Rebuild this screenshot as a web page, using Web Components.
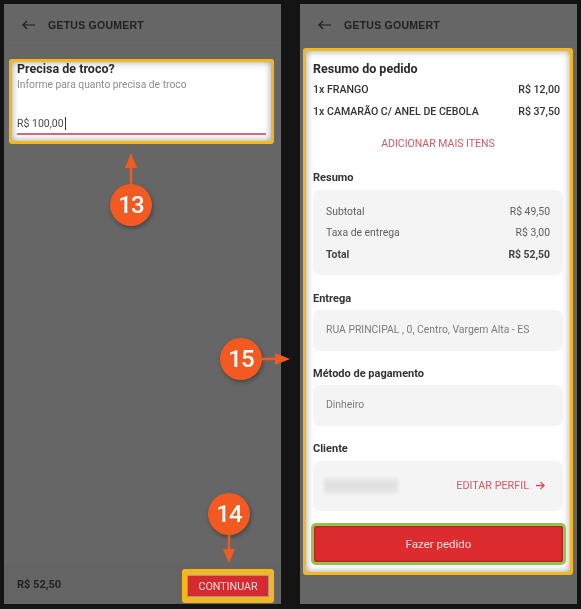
<!DOCTYPE html>
<html lang="pt">
<head>
<meta charset="utf-8">
<title>Getus Goumert</title>
<style>
  html, body { margin: 0; height: 100%; background: #141414; }
  body { font-family: Roboto, "Liberation Sans", Arial, sans-serif; color: #2b2b2b; }
</style>
</head>
<body>
<tutorial-stage>
  <phone-frame>
    <change-card></change-card>
    <footer-bar slot="footer" total="R$ 52,50"></footer-bar>
  </phone-frame>

  <phone-frame>
    <order-card>
      <order-line name="1x FRANGO" price="R$ 12,00"></order-line>
      <order-line name="1x CAMARÃO C/ ANEL DE CEBOLA" price="R$ 37,50"></order-line>
      <add-more>ADICIONAR MAIS ITENS</add-more>

      <info-section label="Resumo" style="--pad:11px 13px 9px;--gap:5px;margin-bottom:16px">
        <sum-line name="Subtotal" value="R$ 49,50"></sum-line>
        <sum-line name="Taxa de entrega" value="R$ 3,00"></sum-line>
        <sum-line name="Total" value="R$ 52,50" strong></sum-line>
      </info-section>
      <info-section label="Entrega" style="--pad:13px 13px 14px">RUA PRINCIPAL , 0, Centro, Vargem Alta - ES</info-section>
      <info-section label="Método de pagamento" style="--pad:13px 13px 14px">Dinheiro</info-section>
      <info-section label="Cliente" style="--pad:16px 13px 16px 11px;--gap:5px">
        <client-row></client-row>
      </info-section>
      <order-button>Fazer pedido</order-button>
    </order-card>
  </phone-frame>

  <step-badge n="13" dir="up" style="left:110px;top:184px"></step-badge>
  <step-badge n="14" dir="down" style="left:208px;top:493px"></step-badge>
  <step-badge n="15" dir="right" style="left:220px;top:338px"></step-badge>
</tutorial-stage>

<script>
class TutorialStage extends HTMLElement {
  constructor() {
    super();
    this.attachShadow({mode: 'open'});
    this.shadowRoot.innerHTML = `
      <style>
        :host {
          display: flex;
          position: relative;
          width: 581px;
          height: 609px;
          box-sizing: border-box;
          padding: 4px 4px 5px 4px;
          gap: 19px;
          overflow: hidden;
          filter: blur(.2px);
        }
      </style>
      <slot></slot>
    `;
  }
}

class PhoneFrame extends HTMLElement {
  constructor() {
    super();
    this.attachShadow({mode: 'open'});
    this.shadowRoot.innerHTML = `
      <style>
        :host {
          display: flex;
          flex-direction: column;
          width: 277px;
          background: #666;
        }
        header {
          display: flex;
          align-items: center;
          gap: 13px;
          height: 42px;
          padding: 0 0 0 18px;
          font: 700 10.5px "Liberation Sans", Arial, sans-serif;
          letter-spacing: .25px;
          color: #222;
          border-bottom: 1px solid #636363;
          box-sizing: border-box;
        }
        svg { width: 13px; height: 10px; display: block; margin-top: 1px; }
        main { flex: 1; }
      </style>
      <header>
        <svg viewBox="0 0 13 10" fill="none" stroke="#1d1d1d" stroke-width="1.2">
          <path d="M13 5H1M5 1 1 5l4 4"/>
        </svg>
        <span>GETUS GOUMERT</span>
      </header>
      <main><slot></slot></main>
      <slot name="footer"></slot>
    `;
  }
}

class ChangeCard extends HTMLElement {
  constructor() {
    super();
    this.attachShadow({mode: 'open'});
    this.shadowRoot.innerHTML = `
      <style>
        :host {
          display: block;
          margin: 13px 7px 0 5px;
          height: 85px;
          box-sizing: border-box;
          border: 3px solid #f4b71e;
          border-radius: 3px;
          background: #fff;
          box-shadow: inset 0 0 7px rgba(0,0,0,.4);
          padding: 0 5px;
        }
        h3 { margin: -1px 0 0; font-size: 12.5px; line-height: 15px; font-weight: 700; color: #2a2a2a; }
        p { margin: 2px 0 0; font-size: 10.3px; line-height: 13px; color: #8c8c8c; }
        .value {
          margin-top: 24px;
          height: 20px;
          box-sizing: border-box;
          font-size: 10.5px;
          line-height: 14px;
          color: #4a4a4a;
          border-bottom: 2px solid #d8677a;
          padding-top: 2px;
        }
        i { border-left: 1px solid #333; margin-left: 1px; }
      </style>
      <h3>Precisa de troco?</h3>
      <p>Informe para quanto precisa de troco</p>
      <div class="value">R$ 100,00<i></i></div>
    `;
  }
}

class FooterBar extends HTMLElement {
  constructor() {
    super();
    this.attachShadow({mode: 'open'});
    this.shadowRoot.innerHTML = `
      <style>
        :host {
          display: flex;
          align-items: center;
          justify-content: space-between;
          height: 39px;
          padding: 0 7px 0 13px;
          background: #646464;
          font-size: 11px;
          font-weight: 700;
          color: #222;
        }
        button {
          width: 92px;
          height: 34px;
          margin-top: 3px;
          box-sizing: border-box;
          border: solid #f4b71e;
          border-width: 6px 5px;
          border-radius: 3px;
          background: #d62a30;
          box-shadow: inset 0 0 0 1px #b09095;
          color: #f3dcdc;
          font: 400 10.7px Roboto, "Liberation Sans", Arial, sans-serif;
          padding: 0;
        }
      </style>
      <span></span>
      <button>CONTINUAR</button>
    `;
    this.shadowRoot.querySelector('span').textContent = this.getAttribute('total');
  }
}

class OrderCard extends HTMLElement {
  constructor() {
    super();
    this.attachShadow({mode: 'open'});
    this.shadowRoot.innerHTML = `
      <style>
        :host {
          display: block;
          margin: 2px 4px 0 3px;
          height: 527px;
          box-sizing: border-box;
          border: 3px solid #f4b71e;
          border-radius: 3px;
          background: #fff;
          box-shadow: inset 0 0 7px rgba(0,0,0,.4);
          padding: 10px 7px 0;
        }
        h2 { margin: 0 0 6px; font-size: 12.5px; font-weight: 700; line-height: 16px; color: #2a2a2a; }
      </style>
      <h2>Resumo do pedido</h2>
      <slot></slot>
    `;
  }
}

class OrderLine extends HTMLElement {
  constructor() {
    super();
    this.attachShadow({mode: 'open'});
    this.shadowRoot.innerHTML = `
      <style>
        :host {
          display: flex;
          justify-content: space-between;
          height: 22px;
          padding-right: 3px;
          font-size: 10.6px;
          line-height: 14px;
          font-weight: 500;
          color: #333;
        }
      </style>
      <span>${this.getAttribute('name')}</span>
      <span>${this.getAttribute('price')}</span>
    `;
  }
}

class AddMore extends HTMLElement {
  constructor() {
    super();
    this.attachShadow({mode: 'open'});
    this.shadowRoot.innerHTML = `
      <style>
        :host {
          display: block;
          margin: 10px 0 19px;
          text-align: center;
          font-size: 10.5px;
          line-height: 14px;
          color: #d05a63;
        }
      </style>
      <slot></slot>
    `;
  }
}

class InfoSection extends HTMLElement {
  constructor() {
    super();
    this.attachShadow({mode: 'open'});
    this.shadowRoot.innerHTML = `
      <style>
        :host { display: block; margin-bottom: 15px; }
        h4 { margin: 0 0 var(--gap, 4px); padding-top: 1px; font-size: 11px; font-weight: 700; line-height: 14px; color: #333; }
        div {
          background: #f4f4f4;
          border-radius: 7px;
          padding: var(--pad, 13px);
          font-size: 10.4px;
          line-height: 14px;
          color: #7c7c7c;
        }
      </style>
      <h4>${this.getAttribute('label')}</h4>
      <div><slot></slot></div>
    `;
  }
}

class SumLine extends HTMLElement {
  constructor() {
    super();
    this.attachShadow({mode: 'open'});
    const strong = this.hasAttribute('strong');
    this.shadowRoot.innerHTML = `
      <style>
        :host {
          display: flex;
          justify-content: space-between;
          height: 21.5px;
          align-items: center;
          font-size: 10.4px;
          color: ${strong ? '#444' : '#5e5e5e'};
          font-weight: ${strong ? 700 : 400};
        }
      </style>
      <span>${this.getAttribute('name')}</span>
      <span>${this.getAttribute('value')}</span>
    `;
  }
}

class ClientRow extends HTMLElement {
  constructor() {
    super();
    this.attachShadow({mode: 'open'});
    this.shadowRoot.innerHTML = `
      <style>
        :host {
          display: flex;
          align-items: center;
          justify-content: space-between;
          height: 18px;
          padding-right: 5px;
        }
        .blur {
          width: 74px;
          height: 16px;
          background: linear-gradient(#e9e9e9, #dedede 50%, #e9e9e9);
          border-radius: 2px;
          filter: blur(1.5px);
        }
        .edit {
          display: flex;
          align-items: center;
          gap: 7px;
          font-size: 10.8px;
          color: #d05a63;
        }
        svg { width: 9px; height: 9px; }
      </style>
      <span class="blur"></span>
      <span class="edit">EDITAR PERFIL
        <svg viewBox="0 0 10 10" fill="none" stroke="#cf4a54" stroke-width="1.4"><path d="M0 5h9M5 1l4 4-4 4"/></svg>
      </span>
    `;
  }
}

class OrderButton extends HTMLElement {
  constructor() {
    super();
    this.attachShadow({mode: 'open'});
    this.shadowRoot.innerHTML = `
      <style>
        :host {
          display: block;
          margin: -3px -3px 0 -2px;
          height: 42px;
          box-sizing: border-box;
          border: 3px solid #8ec64a;
          border-radius: 5px;
        }
        button {
          display: block;
          width: 100%;
          height: 100%;
          border: 0;
          border-radius: 2px;
          background: #dd2c2f;
          box-shadow: inset 0 0 3px #8a1c1e;
          color: #f6dcdc;
          font: 11.5px Roboto, "Liberation Sans", Arial, sans-serif;
          padding: 0;
        }
      </style>
      <button><slot></slot></button>
    `;
  }
}

// numbered callouts that sit on top of the screenshots
const arrows = {
  up:    {box: 'left:15px;top:-31px;width:12px;height:32px', view: '0 0 12 32', path: 'M6 0l6 15H7.2v17H4.8V15H0z'},
  down:  {box: 'left:15px;top:41px;width:12px;height:29px', view: '0 0 12 29', path: 'M4.8 0h2.4v15H12L6 29 0 15h4.8z'},
  right: {box: 'left:41px;top:15px;width:29px;height:12px', view: '0 0 29 12', path: 'M0 4.8h14V0l15 6-15 6V7.2H0z'}
};

class StepBadge extends HTMLElement {
  constructor() {
    super();
    this.attachShadow({mode: 'open'});
    const arrow = arrows[this.getAttribute('dir')];
    this.shadowRoot.innerHTML = `
      <style>
        :host {
          position: absolute;
          width: 42px;
          height: 42px;
          border-radius: 50%;
          background: #f25a22;
          box-shadow: 1px 2px 4px rgba(0,0,0,.35);
          display: flex;
          align-items: center;
          justify-content: center;
          color: #fff;
          font-size: 24px;
          font-weight: 500;
          letter-spacing: -1px;
          font-family: Roboto, sans-serif;
        }
        svg { position: absolute; ${arrow.box}; fill: #f25a22; overflow: visible; }
      </style>
      <svg viewBox="${arrow.view}"><path d="${arrow.path}"/></svg>
      <span>${this.getAttribute('n')}</span>
    `;
  }
}

customElements.define('tutorial-stage', TutorialStage);
customElements.define('phone-frame', PhoneFrame);
customElements.define('change-card', ChangeCard);
customElements.define('footer-bar', FooterBar);
customElements.define('order-card', OrderCard);
customElements.define('order-line', OrderLine);
customElements.define('add-more', AddMore);
customElements.define('info-section', InfoSection);
customElements.define('sum-line', SumLine);
customElements.define('client-row', ClientRow);
customElements.define('order-button', OrderButton);
customElements.define('step-badge', StepBadge);
</script>
</body>
</html>
